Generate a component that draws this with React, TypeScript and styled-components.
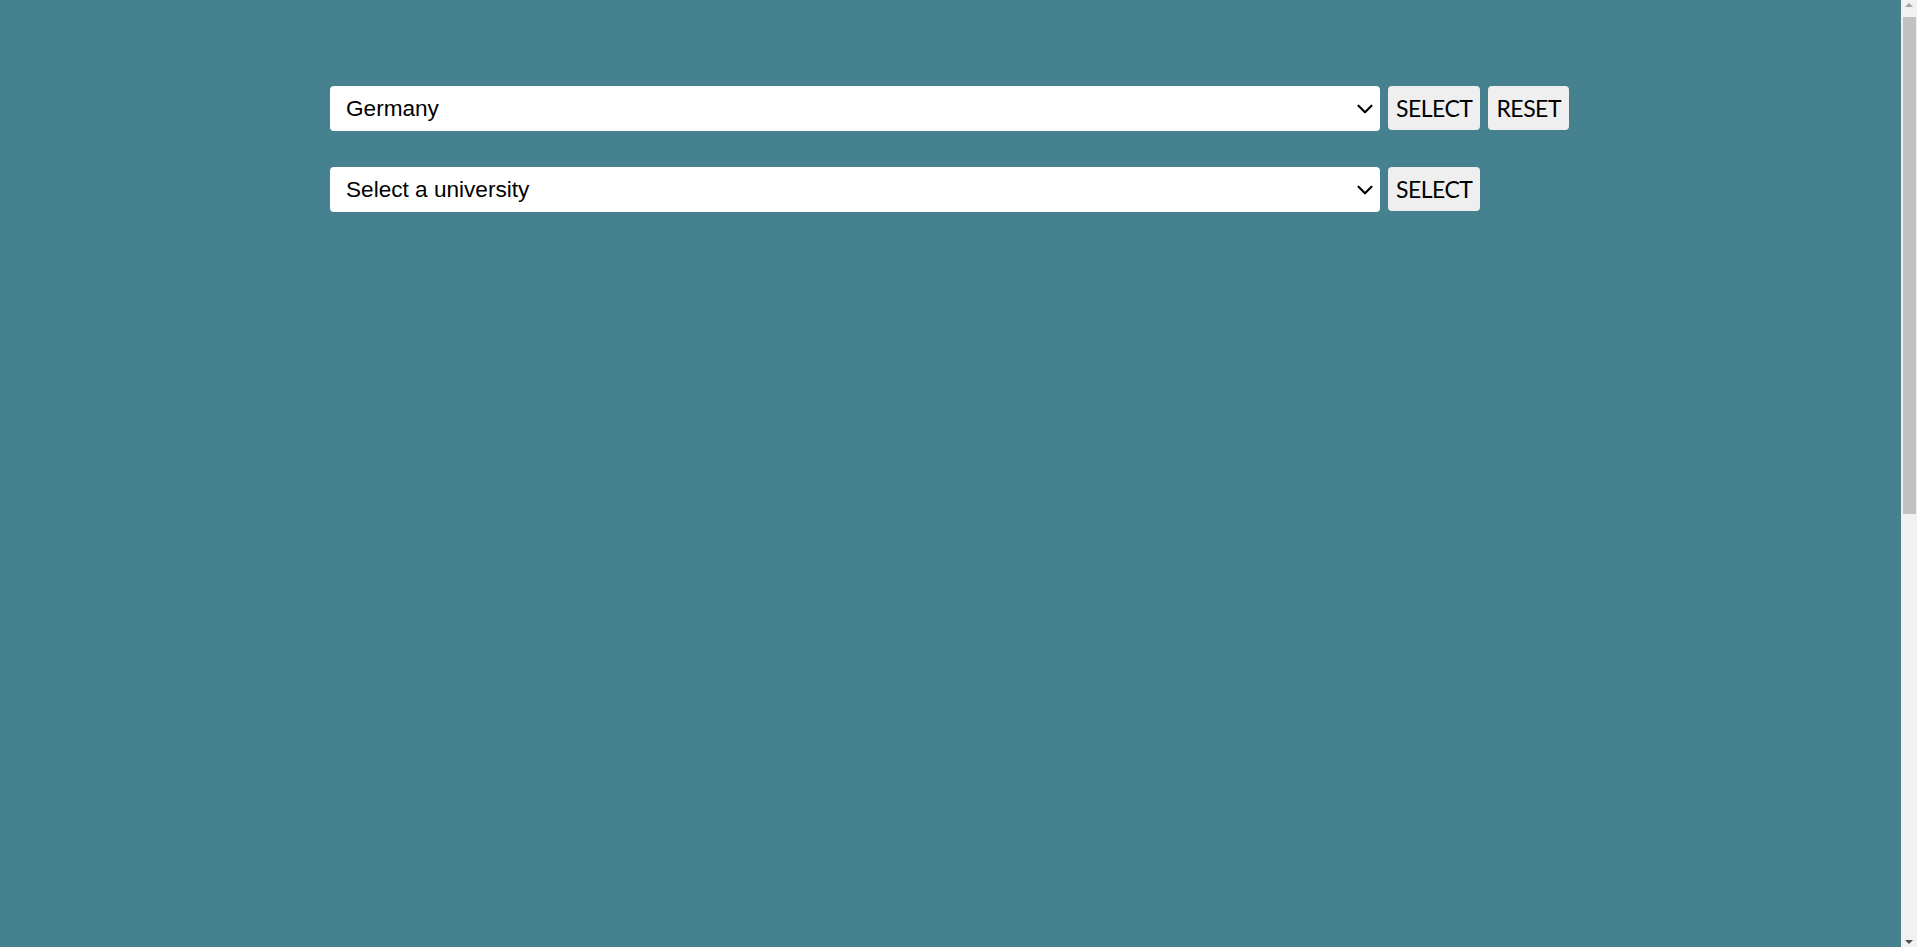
import React from "react";
import styled, { createGlobalStyle } from "styled-components";
import { ChevronDown } from "lucide-react";

const GlobalStyle = createGlobalStyle`
  html, body {
    margin: 0;
    padding: 0;
    background: #45818e;
    overflow: hidden;
  }
  body {
    font-family: "Liberation Sans", Arial, sans-serif;
  }
`;

const Page = styled.div`
  padding: 86px 16px 0 330px;
  box-sizing: border-box;
  height: 947px;
  display: flex;
  flex-direction: column;
  gap: 36px;
`;

const Row = styled.div`
  display: flex;
  align-items: flex-start;
  gap: 8px;
`;

const SelectWrap = styled.div<{ $h: number }>`
  position: relative;
  width: 1050px;
  height: ${(p) => p.$h}px;
`;

const Select = styled.select`
  appearance: none;
  -webkit-appearance: none;
  width: 100%;
  height: 100%;
  box-sizing: border-box;
  border: none;
  border-radius: 4px;
  background: #ffffff;
  color: #000;
  font-family: "Liberation Sans", Arial, sans-serif;
  font-size: 22.6px;
  padding: 0 40px 0 16px;
  outline: none;
`;

const Chevron = styled.span`
  position: absolute;
  right: 2px;
  top: 50%;
  transform: translateY(-50%);
  display: flex;
  pointer-events: none;
  color: #000;
`;

const Button = styled.button<{ $px: number }>`
  height: 44px;
  box-sizing: border-box;
  border: none;
  border-radius: 4px;
  background: #efefef;
  color: #000;
  font-family: "Gill Sans", "Gill Sans MT", Lato, sans-serif;
  font-size: 23px;
  letter-spacing: -0.5px;
  padding: 0 ${(p) => p.$px}px;
  cursor: pointer;
`;

const ScrollRail = styled.div`
  position: fixed;
  top: 0;
  right: 0;
  width: 16px;
  height: 100vh;
  background: #f1f1f1;
  display: flex;
  flex-direction: column;
  align-items: stretch;
`;

const ScrollArrow = styled.div<{ $dir: "up" | "down" }>`
  height: 17px;
  display: flex;
  justify-content: center;
  align-items: ${(p) => (p.$dir === "up" ? "flex-start" : "flex-end")};
  padding: ${(p) => (p.$dir === "up" ? "3px 0 0" : "0 0 3px")};
  box-sizing: border-box;
  &::before {
    content: "";
    width: 0;
    height: 0;
    border-left: 4px solid transparent;
    border-right: 4px solid transparent;
    ${(p) =>
      p.$dir === "up"
        ? "border-bottom: 4px solid #a3a3a3;"
        : "border-top: 4px solid #505050;"}
  }
`;

const ScrollTrack = styled.div`
  flex: 1;
  display: flex;
  flex-direction: column;
`;

const ScrollThumb = styled.div`
  height: 497px;
  margin: 0 1px 0 2px;
  background: #c1c1c1;
`;

function Dropdown({ value, options, height }: { value: string; options: string[]; height: number }) {
  return (
    <SelectWrap $h={height}>
      <Select defaultValue={value}>
        {options.map((o) => (
          <option key={o} value={o}>
            {o}
          </option>
        ))}
      </Select>
      <Chevron>
        <ChevronDown size={26} strokeWidth={2} />
      </Chevron>
    </SelectWrap>
  );
}

export default function App() {
  return (
    <>
      <GlobalStyle />
      <Page>
        <Row>
          <Dropdown value="Germany" options={["Germany", "France", "Italy", "Spain"]} height={45} />
          <Button $px={8}>SELECT</Button>
          <Button $px={8}>RESET</Button>
        </Row>
        <Row>
          <Dropdown value="Select a university" options={["Select a university"]} height={45} />
          <Button $px={8}>SELECT</Button>
        </Row>
      </Page>
      <ScrollRail aria-hidden="true">
        <ScrollArrow $dir="up" />
        <ScrollTrack>
          <ScrollThumb />
        </ScrollTrack>
        <ScrollArrow $dir="down" />
      </ScrollRail>
    </>
  );
}
